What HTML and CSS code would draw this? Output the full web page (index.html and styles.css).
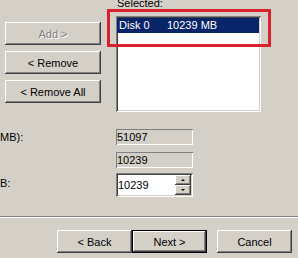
FILE: index.html
```html
<!DOCTYPE html>
<html>
<head>
<meta charset="utf-8">
<link rel="stylesheet" href="styles.css">
</head>
<body>
<div class="dlg">
  <div class="top">
    <div class="btncol">
      <div class="btn disabled">Add &gt;</div>
      <div class="btn">&lt; Remove</div>
      <div class="btn">&lt; Remove All</div>
    </div>
    <div class="selcol">
      <div class="sellabel">Selected:</div>
      <div class="listbox">
        <div class="item selected"><span class="c1">Disk 0</span><span>10239 MB</span></div>
      </div>
    </div>
  </div>
  <div class="highlight"></div>
  <div class="fields">
    <div class="frow r1"><span class="lbl">MB):</span><div class="ro">51097</div></div>
    <div class="frow r2"><span class="lbl"></span><div class="ro">10239</div></div>
    <div class="frow r3"><span class="lbl">B:</span>
      <div class="spin"><span class="val">10239</span>
        <div class="spinbtns">
          <div class="sb"><i class="up"></i></div>
          <div class="sb"><i class="down"></i></div>
        </div>
      </div>
    </div>
  </div>
  <div class="sep"></div>
  <div class="actions">
    <div class="btn wide">&lt; Back</div>
    <div class="btn wide default">Next &gt;</div>
    <div class="btn wide cancel">Cancel</div>
  </div>
</div>
</body>
</html>
```

FILE: styles.css
```css
html, body {
  margin: 0;
  padding: 0;
}
body {
  background: #d4d0c8;
  font: 11px "Liberation Sans", Arial, sans-serif;
  color: #000;
  width: 298px;
  height: 258px;
  overflow: hidden;
}
.dlg {
  position: relative;
  height: 258px;
}
.top {
  display: flex;
  align-items: flex-start;
}
.btncol {
  margin-left: 5px;
  padding-top: 22px;
  width: 96px;
  display: flex;
  flex-direction: column;
  gap: 6px;
}
.btn {
  height: 23px;
  box-sizing: border-box;
  background: #d4d0c8;
  box-shadow: inset -1px -1px #404040, inset 1px 1px #ffffff, inset -2px -2px #808080;
  display: flex;
  align-items: center;
  justify-content: center;
  white-space: nowrap;
}
.disabled {
  color: #808080;
  text-shadow: 1px 1px #ffffff;
}
.selcol {
  margin-left: 15px;
  width: 145px;
}
.sellabel {
  margin-top: -3px;
  height: 19px;
  line-height: 13px;
  padding-left: 1px;
}
.listbox {
  height: 96px;
  box-sizing: border-box;
  background: #ffffff;
  box-shadow: inset 1px 1px #808080, inset -1px -1px #ffffff, inset 2px 2px #404040, inset -2px -2px #d4d0c8;
  padding: 2px 2px 2px 1px;
}
.item {
  height: 15px;
  line-height: 15px;
  padding-left: 2px;
  display: flex;
  white-space: nowrap;
}
.selected {
  background: #0a246a;
  color: #ffffff;
}
.c1 {
  width: 48px;
}
.highlight {
  position: absolute;
  left: 107px;
  top: 9px;
  width: 164px;
  height: 38px;
  box-sizing: border-box;
  border: 3px solid #d8222b;
}
.fields {
  margin-top: 17px;
  display: flex;
  flex-direction: column;
}
.frow {
  display: flex;
  align-items: center;
}
.r2 { margin-top: 7px; }
.r3 { margin-top: 5px; }
.lbl {
  width: 116px;
  white-space: nowrap;
}
.r3 .lbl {
  position: relative;
  top: -2px;
}
.ro {
  width: 77px;
  height: 16px;
  box-sizing: border-box;
  line-height: 16px;
  padding-left: 1px;
  box-shadow: inset 1px 1px #808080, inset -1px -1px #ffffff;
}
.spin {
  width: 77px;
  height: 24px;
  box-sizing: border-box;
  background: #ffffff;
  box-shadow: inset 1px 1px #808080, inset -1px -1px #ffffff, inset 2px 2px #404040, inset -2px -2px #d4d0c8;
  display: flex;
  align-items: center;
  padding: 0 1px 0 2px;
}
.val {
  flex: 1;
}
.spinbtns {
  display: flex;
  flex-direction: column;
  width: 16px;
  margin-right: 1px;
}
.sb {
  height: 10px;
  box-sizing: border-box;
  background: #d4d0c8;
  box-shadow: inset -1px -1px #404040, inset 1px 1px #ffffff, inset -2px -2px #808080;
  display: flex;
  align-items: center;
  justify-content: center;
}
.up, .down {
  display: block;
  width: 0;
  height: 0;
  border-left: 2px solid transparent;
  border-right: 2px solid transparent;
}
.up {
  border-bottom: 2px solid #000;
}
.down {
  border-top: 2px solid #000;
}
.sep {
  margin-top: 19px;
  height: 0;
  border-top: 1px solid #808080;
  border-bottom: 1px solid #ffffff;
}
.actions {
  margin-top: 12px;
  padding-left: 57px;
  display: flex;
}
.wide {
  width: 75px;
}
.default {
  box-shadow: inset 0 0 0 1px #000000, inset -2px -2px #404040, inset 2px 2px #ffffff, inset -3px -3px #808080;
}
.cancel {
  margin-left: 10px;
}
```
